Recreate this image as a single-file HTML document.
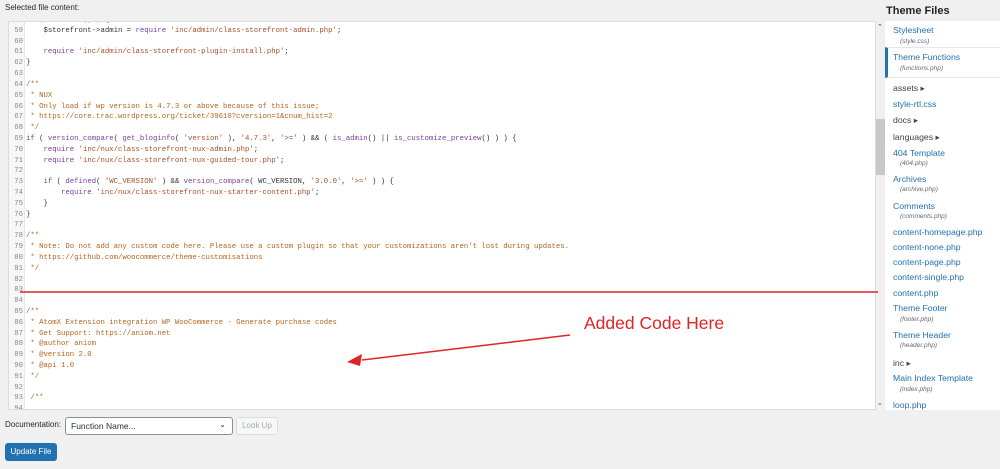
<!DOCTYPE html>
<html><head><meta charset="utf-8"><style>
*{margin:0;padding:0;box-sizing:border-box}
body{width:1000px;height:469px;background:#f0f0f1;font-family:"Liberation Sans",sans-serif;position:relative;overflow:hidden;color:#1d2327}
.abs{position:absolute}
#ed{left:8px;top:21px;width:868px;height:389px;background:#fff;border:1px solid #dcdcde;overflow:hidden}
#gut{left:0;top:0;width:16px;height:389px;background:#f7f7f7;border-right:1px solid #e6e6e6}
#code{left:0;top:-7px;font-family:"Liberation Mono",monospace;font-size:7.3px;line-height:10.82px;white-space:pre;color:#333}
.n{display:inline-block;width:14px;text-align:right;color:#888;margin-right:3px}
.k{color:#7a3e9d}.s{color:#a6502a}.c{color:#b5651d}.v{color:#333}
#sb{left:876px;top:21px;width:9px;height:389px;background:#f0f0f1}
#side{left:885px;top:21px;width:115px;height:389px;background:#fff;font-size:8.7px}
.it{position:absolute;left:8px;color:#2271b1;white-space:nowrap}
.fo{color:#3c434a}
.sm{position:absolute;left:15px;font-size:6.5px;font-style:italic;color:#646970;white-space:nowrap}
</style></head><body>
<div class="abs" style="left:5px;top:3px;font-size:8px">Selected file content:</div>
<div class="abs" style="left:886px;top:5px;font-size:11px;font-weight:bold">Theme Files</div>
<div id="ed" class="abs">
<div id="gut" class="abs"></div>
<div id="code" class="abs"><span class="n">58</span><span class="k">if</span> ( is_admin() ) {
<span class="n">59</span>    $storefront-&gt;admin = <span class="k">require</span> <span class="s">'inc/admin/class-storefront-admin.php'</span>;
<span class="n">60</span>
<span class="n">61</span>    <span class="k">require</span> <span class="s">'inc/admin/class-storefront-plugin-install.php'</span>;
<span class="n">62</span>}
<span class="n">63</span>
<span class="n">64</span><span class="c">/**</span>
<span class="n">65</span><span class="c"> * NUX</span>
<span class="n">66</span><span class="c"> * Only load if wp version is 4.7.3 or above because of this issue;</span>
<span class="n">67</span><span class="c"> * https://core.trac.wordpress.org/ticket/39610?cversion=1&amp;cnum_hist=2</span>
<span class="n">68</span><span class="c"> */</span>
<span class="n">69</span><span class="k">if</span> ( <span class="k">version_compare</span>( <span class="k">get_bloginfo</span>( <span class="s">'version'</span> ), <span class="s">'4.7.3'</span>, <span class="s">'&gt;='</span> ) &amp;&amp; ( <span class="k">is_admin</span>() || <span class="k">is_customize_preview</span>() ) ) {
<span class="n">70</span>    <span class="k">require</span> <span class="s">'inc/nux/class-storefront-nux-admin.php'</span>;
<span class="n">71</span>    <span class="k">require</span> <span class="s">'inc/nux/class-storefront-nux-guided-tour.php'</span>;
<span class="n">72</span>
<span class="n">73</span>    <span class="k">if</span> ( <span class="k">defined</span>( <span class="s">'WC_VERSION'</span> ) &amp;&amp; <span class="k">version_compare</span>( WC_VERSION, <span class="s">'3.0.0'</span>, <span class="s">'&gt;='</span> ) ) {
<span class="n">74</span>        <span class="k">require</span> <span class="s">'inc/nux/class-storefront-nux-starter-content.php'</span>;
<span class="n">75</span>    }
<span class="n">76</span>}
<span class="n">77</span>
<span class="n">78</span><span class="c">/**</span>
<span class="n">79</span><span class="c"> * Note: Do not add any custom code here. Please use a custom plugin so that your customizations aren't lost during updates.</span>
<span class="n">80</span><span class="c"> * https://github.com/woocommerce/theme-customisations</span>
<span class="n">81</span><span class="c"> */</span>
<span class="n">82</span>
<span class="n">83</span>
<span class="n">84</span>
<span class="n">85</span><span class="c">/**</span>
<span class="n">86</span><span class="c"> * AtomX Extension integration WP WooCommerce - Generate purchase codes</span>
<span class="n">87</span><span class="c"> * Get Support: https://aniom.net</span>
<span class="n">88</span><span class="c"> * @author aniom</span>
<span class="n">89</span><span class="c"> * @version 2.0</span>
<span class="n">90</span><span class="c"> * @api 1.0</span>
<span class="n">91</span><span class="c"> */</span>
<span class="n">92</span>
<span class="n">93</span><span class="c"> /**</span>
<span class="n">94</span>
</div>
</div>
<div id="sb" class="abs"><div class="abs" style="left:0;top:98px;width:9px;height:56px;background:#c8c8c8"></div>
<div class="abs" style="left:1px;top:2px;font-size:7px;color:#444">&#8963;</div>
<div class="abs" style="left:1px;top:378px;font-size:7px;color:#444">&#8964;</div></div>
<div id="side" class="abs">
<div class="abs" style="left:0;top:26px;width:115px;height:31px;border-top:1px solid #e6e6e6;border-bottom:1px solid #e6e6e6;border-left:3px solid #2271b1"></div>
<div class="it" style="top:4px">Stylesheet</div><div class="sm" style="top:17px">(style.css)</div>
<div class="it" style="top:31px">Theme Functions</div><div class="sm" style="top:44px">(functions.php)</div>
<div class="it fo" style="top:62px">assets ▸</div>
<div class="it" style="top:78px">style-rtl.css</div>
<div class="it fo" style="top:94px">docs ▸</div>
<div class="it fo" style="top:111px">languages ▸</div>
<div class="it" style="top:127px">404 Template</div><div class="sm" style="top:139px">(404.php)</div>
<div class="it" style="top:153px">Archives</div><div class="sm" style="top:165px">(archive.php)</div>
<div class="it" style="top:180px">Comments</div><div class="sm" style="top:192px">(comments.php)</div>
<div class="it" style="top:206px">content-homepage.php</div>
<div class="it" style="top:221px">content-none.php</div>
<div class="it" style="top:236px">content-page.php</div>
<div class="it" style="top:251px">content-single.php</div>
<div class="it" style="top:267px">content.php</div>
<div class="it" style="top:282px">Theme Footer</div><div class="sm" style="top:295px">(footer.php)</div>
<div class="it" style="top:309px">Theme Header</div><div class="sm" style="top:321px">(header.php)</div>
<div class="it fo" style="top:337px">inc ▸</div>
<div class="it" style="top:352px">Main Index Template</div><div class="sm" style="top:365px">(index.php)</div>
<div class="it" style="top:379px">loop.php</div>
</div>
<svg class="abs" style="left:0;top:0" width="1000" height="469">
<line x1="20" y1="292" x2="878" y2="292" stroke="#e02424" stroke-width="1.5"/>
<line x1="570" y1="335" x2="362" y2="360" stroke="#e02424" stroke-width="1.5"/>
<polygon points="347,362 362,354 360,366" fill="#e02424"/>
</svg>
<div class="abs" style="left:584px;top:313px;font-size:17.5px;color:#e02424">Added Code Here</div>
<div class="abs" style="left:5px;top:420px;font-size:8px">Documentation:</div>
<div class="abs" style="left:65px;top:417px;width:168px;height:18px;background:#fff;border:1px solid #8c8f94;border-radius:3px;font-size:8.5px;padding:3px 5px;color:#2c3338">Function Name...<span style="position:absolute;right:6px;top:2px;font-size:8px">⌄</span></div>
<div class="abs" style="left:236px;top:417px;width:42px;height:18px;border:1px solid #dcdcde;border-radius:3px;font-size:8px;color:#a7aaad;text-align:center;line-height:16px;background:#f6f7f7">Look Up</div>
<div class="abs" style="left:5px;top:443px;width:52px;height:18px;background:#2271b1;border-radius:3px;font-size:8px;color:#fff;text-align:center;line-height:18px">Update File</div>
</body></html>
